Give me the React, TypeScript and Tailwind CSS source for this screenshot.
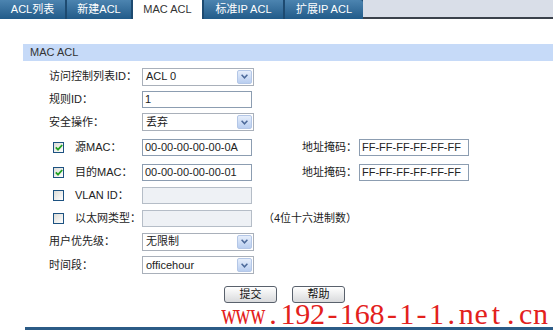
import React from "react";

function Arrow() {
  return (
    <span className="w-[15px] h-[14px] rounded-[2px] border border-[#b4c7e7] bg-gradient-to-b from-[#e6eefb] to-[#b9cef0] flex items-center justify-center">
      <svg width="7" height="5" viewBox="0 0 7 5">
        <path d="M0.6 0.7 L3.5 3.8 L6.4 0.7" stroke="#4d6a9a" strokeWidth="1.5" fill="none" />
      </svg>
    </span>
  );
}

function Select({ value }: { value: string }) {
  return (
    <div className="w-[112px] h-[18px] border border-[#a9b0ba] bg-white flex items-center justify-between pl-[3px] pr-[1px]">
      <span>{value}</span>
      <Arrow />
    </div>
  );
}

function Input({ value, disabled }: { value?: string; disabled?: boolean }) {
  return (
    <div
      className={
        disabled
          ? "w-[110px] h-[17px] border border-[#b5bdc7] bg-[#eef1f5]"
          : "w-[110px] h-[17px] border border-[#8c9db1] bg-white pl-[2px] flex items-center"
      }
    >
      {value}
    </div>
  );
}

function Check({ checked }: { checked?: boolean }) {
  return (
    <span className="w-[11px] h-[11px] border border-[#1d5281] bg-gradient-to-br from-[#dcdcd7] to-white flex items-center justify-center">
      {checked && (
        <svg width="8" height="7" viewBox="0 0 8 7">
          <path d="M0.8 3.4 L3 5.6 L7.2 1" stroke="#21a121" strokeWidth="1.8" fill="none" />
        </svg>
      )}
    </span>
  );
}

function Row({ h, label, children }: { h: string; label: string; children: React.ReactNode }) {
  return (
    <div className={"flex items-center pl-[49px] " + h}>
      <span className="w-[93px]">{label}</span>
      {children}
    </div>
  );
}

function CRow({
  h,
  label,
  checked,
  children,
}: {
  h: string;
  label: string;
  checked?: boolean;
  children: React.ReactNode;
}) {
  return (
    <div className={"flex items-center pl-[53px] " + h}>
      <Check checked={checked} />
      <span className="w-[67px] ml-[11px]">{label}</span>
      {children}
    </div>
  );
}

function Btn({ label }: { label: string }) {
  return (
    <div className="w-[53px] h-[17px] rounded-[3px] border border-[#59616c] bg-gradient-to-b from-white to-[#d9dadc] flex items-center justify-center text-[#111]">
      {label}
    </div>
  );
}

const WM = "www.192-168-1-1.net.cn";

export default function App() {
  return (
    <div className="w-[553px] h-[330px] relative overflow-hidden bg-white text-[11px] text-[#222] font-['Liberation_Sans','Noto_Sans_CJK_SC',sans-serif] leading-none">
      {/* tabs */}
      <div className="flex h-[19px]">
        <div className="flex gap-[2px] bg-[#1d4a70] h-full">
          <div className="w-[65px] h-full bg-gradient-to-b from-[#4c84b0] to-[#215b89] text-white flex items-center justify-center">ACL列表</div>
          <div className="w-[64px] h-full bg-gradient-to-b from-[#4c84b0] to-[#215b89] text-white flex items-center justify-center">新建ACL</div>
          <div className="w-[69px] h-full bg-white text-[#333] flex items-center justify-center">MAC ACL</div>
          <div className="w-[79px] h-full bg-gradient-to-b from-[#4c84b0] to-[#215b89] text-white flex items-center justify-center">标准IP ACL</div>
          <div className="w-[78px] h-full bg-gradient-to-b from-[#4c84b0] to-[#215b89] text-white flex items-center justify-center rounded-tr-[3px]">扩展IP ACL</div>
        </div>
        <div className="flex-1 bg-[#d9dee8] border-b-2 border-[#3a414b]" />
      </div>

      {/* header band */}
      <div className="mt-[25px] ml-[23px] h-[17px] bg-[#c6daf8] pl-[7px] flex items-center text-[#333]">MAC ACL</div>

      {/* form */}
      <div className="mt-[4px] flex flex-col">
        <Row h="h-[23px]" label="访问控制列表ID：">
          <Select value="ACL 0" />
        </Row>
        <Row h="h-[22px]" label="规则ID：">
          <Input value="1" />
        </Row>
        <Row h="h-[24px]" label="安全操作：">
          <Select value="丢弃" />
        </Row>
        <CRow h="h-[26px]" label="源MAC：" checked>
          <Input value="00-00-00-00-00-0A" />
          <span className="ml-[50px] w-[57px]">地址掩码：</span>
          <Input value="FF-FF-FF-FF-FF-FF" />
        </CRow>
        <CRow h="h-[24px]" label="目的MAC：" checked>
          <Input value="00-00-00-00-00-01" />
          <span className="ml-[50px] w-[57px]">地址掩码：</span>
          <Input value="FF-FF-FF-FF-FF-FF" />
        </CRow>
        <CRow h="h-[23px]" label="VLAN ID：">
          <Input disabled />
        </CRow>
        <CRow h="h-[23px]" label="以太网类型：">
          <Input disabled />
          <span className="ml-[11px]">（4位十六进制数）</span>
        </CRow>
        <Row h="h-[23px]" label="用户优先级：">
          <Select value="无限制" />
        </Row>
        <Row h="h-[24px]" label="时间段：">
          <Select value="officehour" />
        </Row>
      </div>

      {/* buttons */}
      <div className="mt-[9px] flex pl-[224px] gap-[15px]">
        <Btn label="提交" />
        <Btn label="帮助" />
      </div>

      {/* bottom line */}
      <div className="mt-[24px] ml-[25px] h-[3px] bg-[#2b5b86]" />

      {/* watermark */}
      <div className="absolute left-[221px] top-[303px] flex text-[30px] leading-[22px] text-[#e3211c] font-['Liberation_Serif',serif]">
        {WM.split("").map((c, i) => (
          <span key={i} className="w-[14.86px] flex justify-center">
            <span className={c === "w" ? "inline-block scale-x-[0.7]" : "inline-block"}>{c}</span>
          </span>
        ))}
      </div>
    </div>
  );
}
